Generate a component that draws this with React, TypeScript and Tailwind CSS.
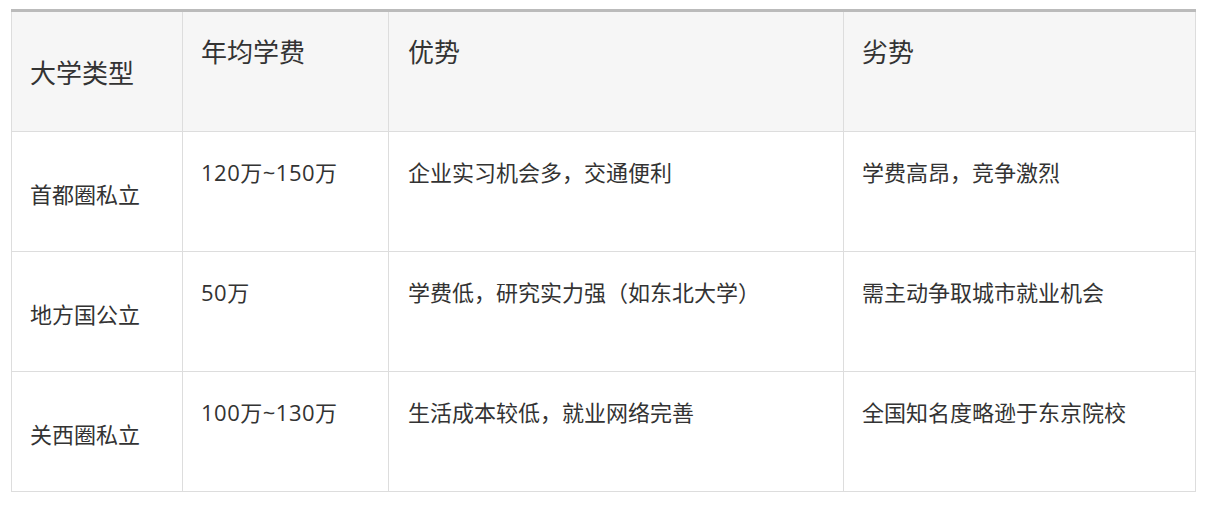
const rows = [
  ['首都圈私立', '120万~150万', '企业实习机会多，交通便利', '学费高昂，竞争激烈'],
  ['地方国公立', '50万', '学费低，研究实力强（如东北大学）', '需主动争取城市就业机会'],
  ['关西圈私立', '100万~130万', '生活成本较低，就业网络完善', '全国知名度略逊于东京院校'],
]

const font = { fontFamily: '"Open Sans", "Noto Sans CJK SC", sans-serif' }

export default function App() {
  return (
    <div className="bg-white w-[1207px] h-[507px] pt-[9px] pl-[11px]" style={font}>
      <table className="table-fixed border-collapse w-[1184px] text-[#333]">
        <colgroup>
          <col className="w-[171px]" />
          <col className="w-[206px]" />
          <col className="w-[455px]" />
          <col className="w-[352px]" />
        </colgroup>
        <thead>
          <tr className="h-[121px] bg-[#f6f6f6]">
            <th className="border border-[#ddd] border-t-[3px] border-t-[#bbb] px-[18px] pt-[3px] align-middle text-left font-normal text-[26px] leading-[39px]">
              大学类型
            </th>
            <th className="border border-[#ddd] border-t-[3px] border-t-[#bbb] px-[18px] pt-[21px] align-top text-left font-normal text-[26px] leading-[39px]">
              年均学费
            </th>
            <th className="border border-[#ddd] border-t-[3px] border-t-[#bbb] px-[19px] pt-[21px] align-top text-left font-normal text-[26px] leading-[39px]">
              优势
            </th>
            <th className="border border-[#ddd] border-t-[3px] border-t-[#bbb] px-[18px] pt-[21px] align-top text-left font-normal text-[26px] leading-[39px]">
              劣势
            </th>
          </tr>
        </thead>
        <tbody>
          {rows.map((r) => (
            <tr key={r[0]} className="h-[120px]">
              <td className="border border-[#ddd] px-[18px] pt-[5px] align-middle text-[22px] leading-[33px]">{r[0]}</td>
              <td className="border border-[#ddd] px-[18px] pt-[24px] align-top text-[22px] leading-[33px] tracking-[0.5px]">{r[1]}</td>
              <td className="border border-[#ddd] px-[19px] pt-[24px] align-top text-[22px] leading-[33px]">{r[2]}</td>
              <td className="border border-[#ddd] px-[18px] pt-[24px] align-top text-[22px] leading-[33px]">{r[3]}</td>
            </tr>
          ))}
        </tbody>
      </table>
    </div>
  )
}
